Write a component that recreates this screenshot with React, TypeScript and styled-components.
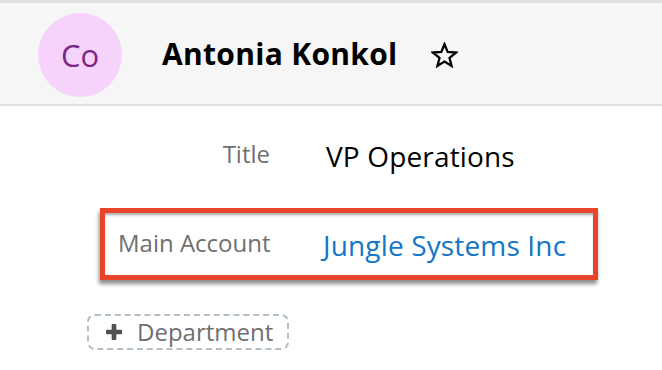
import styled, { createGlobalStyle } from "styled-components";

const Global = createGlobalStyle`
  body {
    margin: 0;
    background: #ffffff;
    font-family: "Open Sans", "Noto Sans", sans-serif;
  }
`;

const Page = styled.div`
  width: 662px;
  height: 370px;
  overflow: hidden;
`;

const Header = styled.header`
  height: 101px;
  background: #f6f6f6;
  border-top: 3px solid #dde1e4;
  border-bottom: 2px solid #dde1e4;
  display: flex;
  align-items: center;
  padding-left: 38px;
  box-sizing: content-box;
`;

const Avatar = styled.div`
  width: 84px;
  height: 84px;
  border-radius: 50%;
  background: #f6d3fb;
  color: #7a2a82;
  font-size: 31px;
  display: flex;
  align-items: center;
  justify-content: center;
  margin-top: 2px;
`;

const Name = styled.h1`
  margin: 0 0 0 40px;
  font-size: 30px;
  font-weight: 700;
  color: #000;
  letter-spacing: 0.3px;
`;

const StarButton = styled.span`
  display: flex;
  margin-left: 33px;
  margin-top: 2px;
`;

const Fields = styled.div`
  display: flex;
  flex-direction: column;
  gap: 17px;
  padding: 13px 0 0 100px;
`;

const Row = styled.div<{ $highlight?: boolean }>`
  width: 498px;
  box-sizing: border-box;
  display: flex;
  align-items: flex-start;
  gap: ${(p) => (p.$highlight ? 53 : 56)}px;
  padding: 13px 13px 11px;
  border: 5px solid ${(p) => (p.$highlight ? "#e8432b" : "transparent")};
  box-shadow: ${(p) =>
    p.$highlight
      ? "-1px 4px 4px rgba(0,0,0,0.45), inset 0 3px 3px -1px rgba(0,0,0,0.35)"
      : "none"};
`;

const Label = styled.div`
  width: 152px;
  flex-shrink: 0;
  text-align: right;
  white-space: nowrap;
  font-size: 24px;
  color: #6f6f6f;
  line-height: 33px;
`;

const Value = styled.div<{ $link?: boolean }>`
  font-size: 28px;
  line-height: 38px;
  white-space: nowrap;
  letter-spacing: 0.15px;
  color: ${(p) => (p.$link ? "#1376c6" : "#000")};
`;

const AddButton = styled.button`
  align-self: flex-start;
  margin: 34px 0 0 87px;
  display: flex;
  align-items: center;
  gap: 15px;
  padding: 2px 14px 2px 17px;
  border: 2px dashed #b3bec6;
  border-radius: 8px;
  background: #fff;
  font-family: inherit;
  font-size: 24px;
  line-height: 28px;
  color: #6f6f6f;
`;

function StarIcon() {
  return (
    <svg width="27" height="26" viewBox="0 0 26 25">
      <polygon
        points="13,2 16,9.6 24,10.2 17.8,15.3 19.8,23 13,18.8 6.2,23 8.2,15.3 2,10.2 10,9.6"
        fill="none"
        stroke="#000"
        strokeWidth="2.2"
        strokeLinejoin="miter"
      />
    </svg>
  );
}

function PlusIcon() {
  return (
    <svg width="16" height="16" viewBox="0 0 15 15">
      <rect x="5.3" y="0" width="4.4" height="15" rx="1" fill="#505050" />
      <rect x="0" y="5.3" width="15" height="4.4" rx="1" fill="#505050" />
    </svg>
  );
}

export default function App() {
  return (
    <Page>
      <Global />
      <Header>
        <Avatar>Co</Avatar>
        <Name>Antonia Konkol</Name>
        <StarButton>
          <StarIcon />
        </StarButton>
      </Header>
      <Fields>
        <Row>
          <Label>Title</Label>
          <Value>VP Operations</Value>
        </Row>
        <Row $highlight>
          <Label>Main Account</Label>
          <Value $link>Jungle Systems Inc</Value>
        </Row>
      </Fields>
      <AddButton>
        <PlusIcon />
        Department
      </AddButton>
    </Page>
  );
}
